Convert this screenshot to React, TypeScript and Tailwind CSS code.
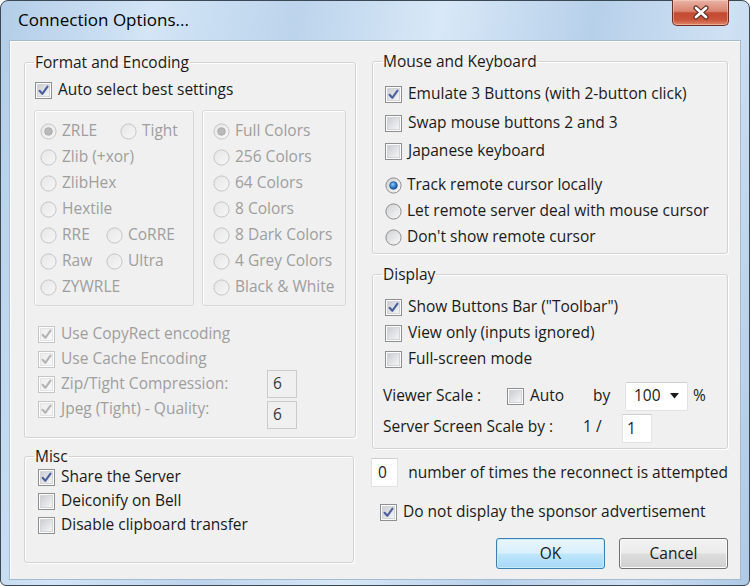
import { useId } from 'react';
import type { ReactNode } from 'react';

type MarkProps = { checked?: boolean; disabled?: boolean };

const cleanId = (id: string) => id.replace(/[^a-zA-Z0-9]/g, '');

function CheckMark({ checked, disabled }: MarkProps) {
  const id = cleanId(useId());
  return (
    <svg width="17" height="17" viewBox="0 0 17 17" className="shrink-0">
      <defs>
        <linearGradient id={id} x1="0" y1="0" x2="1" y2="1">
          <stop offset="0" stopColor={disabled ? '#ececec' : '#c9ccd2'} />
          <stop offset="1" stopColor={disabled ? '#f8f8f8' : '#f7f7f7'} />
        </linearGradient>
      </defs>
      <rect x="0.5" y="0.5" width="16" height="16" fill="#fdfdfd" stroke={disabled ? '#c6c6c6' : '#8e8f8f'} />
      <rect x="2.5" y="2.5" width="12" height="12" fill={`url(#${id})`} stroke={disabled ? '#e4e4e4' : '#d2d4d8'} />
      {checked && (
        <path
          d="M4.6 8.8 7.3 11.8 12.5 4.6"
          fill="none"
          stroke={disabled ? '#b3b3b3' : '#4a5f9c'}
          strokeWidth="2.1"
          strokeLinecap="round"
          strokeLinejoin="round"
        />
      )}
    </svg>
  );
}

function RadioMark({ checked, disabled }: MarkProps) {
  const id = cleanId(useId());
  return (
    <svg width="17" height="17" viewBox="0 0 17 17" className="shrink-0">
      <defs>
        <linearGradient id={id + 'a'} x1="0" y1="0" x2="1" y2="1">
          <stop offset="0" stopColor={disabled ? '#e6e6e6' : '#cfd1d4'} />
          <stop offset="1" stopColor={disabled ? '#f7f7f7' : '#fafafa'} />
        </linearGradient>
        <radialGradient id={id + 'b'} cx="0.4" cy="0.35" r="0.7">
          <stop offset="0" stopColor="#8fd0ff" />
          <stop offset="0.55" stopColor="#2f7fd0" />
          <stop offset="1" stopColor="#174a8a" />
        </radialGradient>
      </defs>
      <circle cx="8.5" cy="8.5" r="7.6" fill={`url(#${id}a)`} stroke={disabled ? '#c4c4c4' : '#8c8c8c'} />
      {checked && (
        <circle
          cx="8.5"
          cy="8.5"
          r="3.8"
          fill={disabled ? '#b9b9b9' : `url(#${id}b)`}
          stroke={disabled ? '#a4a4a4' : '#1b4f8f'}
          strokeWidth="0.8"
        />
      )}
    </svg>
  );
}

type RowProps = MarkProps & { label: string; className?: string; children?: ReactNode };

function CheckRow({ label, checked, disabled, className = '', children }: RowProps) {
  return (
    <div className={`flex h-[20px] items-center ${className}`}>
      <CheckMark checked={checked} disabled={disabled} />
      <span className={`ml-[6px] whitespace-nowrap ${disabled ? 'text-[#9e9e9e]' : ''}`}>{label}</span>
      {children}
    </div>
  );
}

function RadioItem({ label, checked, disabled, className = '' }: RowProps) {
  return (
    <div className={`flex h-[20px] items-center ${className}`}>
      <RadioMark checked={checked} disabled={disabled} />
      <span className={`ml-[5px] whitespace-nowrap ${disabled ? 'text-[#9e9e9e]' : ''}`}>{label}</span>
    </div>
  );
}

function Group({ title, className = '', children }: { title: string; className?: string; children: ReactNode }) {
  return (
    <fieldset
      className={`rounded-[3px] border border-[#d3d3d3] px-[9px] shadow-[inset_1px_1px_0_#ffffff,1px_1px_0_#ffffff] ${className}`}
    >
      <legend className="px-[1px] leading-[20px]">{title}</legend>
      {children}
    </fieldset>
  );
}

function CloseGlyph() {
  return (
    <svg width="18" height="15" viewBox="0 0 18 15">
      <path d="M4 3 14 12 M14 3 4 12" stroke="#5a2a22" strokeWidth="5" strokeLinecap="round" />
      <path d="M4 3 14 12 M14 3 4 12" stroke="#ffffff" strokeWidth="2.8" strokeLinecap="round" />
    </svg>
  );
}

export default function App() {
  return (
    <div className="h-[586px] w-[750px] bg-white font-['Open_Sans',sans-serif] text-[15.5px] text-[#1a1a1a]">
      <div className="flex h-full w-full flex-col rounded-t-[8px] rounded-b-[6px] border border-[#3d4855] bg-[linear-gradient(100deg,#b3cde8_0%,#d3e5f6_18%,#bcd4ec_35%,#d8e8f7_52%,#b7d0ea_70%,#cfe1f3_86%,#aec9e6_100%)] px-[8px] pb-[5px]">
        <div className="flex h-[39px] shrink-0 items-start justify-between">
          <div className="pl-[9px] pt-[8px] text-[17px] leading-[22px] text-black">Connection Options...</div>
          <div className="-mt-px mr-[12px] flex h-[26px] w-[57px] items-center justify-center rounded-b-[5px] border border-t-0 border-[#6b2f26] bg-[linear-gradient(#eab3a6,#d98571_45%,#c44a32_52%,#c9553b_80%,#e0866a)] shadow-[inset_0_0_0_1px_rgba(255,220,210,0.45)]">
            <CloseGlyph />
          </div>
        </div>

        <div className="flex flex-1 border border-[#a4bad0] bg-[#f0f0f0] shadow-[inset_1px_1px_0_#ffffff]">
          {/* left column */}
          <div className="ml-[14px] mt-[11px] flex w-[330px] flex-col">
            <Group title="Format and Encoding" className="h-[386px]">
              <CheckRow label="Auto select best settings" checked className="ml-[1px] mt-[8px]" />
              <div className="mt-[10px] flex gap-[8px]">
                <div className="flex h-[196px] w-[160px] flex-col gap-[6px] rounded-[3px] border border-[#d9d9d9] pl-[5px] pt-[10px] shadow-[inset_1px_1px_0_#ffffff]">
                  <div className="flex">
                    <RadioItem label="ZRLE" checked disabled className="w-[80px]" />
                    <RadioItem label="Tight" disabled />
                  </div>
                  <RadioItem label="Zlib (+xor)" disabled />
                  <RadioItem label="ZlibHex" disabled />
                  <RadioItem label="Hextile" disabled />
                  <div className="flex">
                    <RadioItem label="RRE" disabled className="w-[66px]" />
                    <RadioItem label="CoRRE" disabled />
                  </div>
                  <div className="flex">
                    <RadioItem label="Raw" disabled className="w-[66px]" />
                    <RadioItem label="Ultra" disabled />
                  </div>
                  <RadioItem label="ZYWRLE" disabled />
                </div>
                <div className="flex h-[196px] w-[144px] flex-col gap-[6px] rounded-[3px] border border-[#d9d9d9] pl-[10px] pt-[10px] shadow-[inset_1px_1px_0_#ffffff]">
                  <RadioItem label="Full Colors" checked disabled />
                  <RadioItem label="256 Colors" disabled />
                  <RadioItem label="64 Colors" disabled />
                  <RadioItem label="8 Colors" disabled />
                  <RadioItem label="8 Dark Colors" disabled />
                  <RadioItem label="4 Grey Colors" disabled />
                  <RadioItem label="Black & White" disabled />
                </div>
              </div>
              <div className="ml-[4px] mt-[18px] flex flex-col gap-[5px]">
                <CheckRow label="Use CopyRect encoding" checked disabled />
                <CheckRow label="Use Cache Encoding" checked disabled />
                <div className="flex h-[20px] items-center">
                  <CheckMark checked disabled />
                  <span className="ml-[6px] w-[206px] whitespace-nowrap text-[#9e9e9e]">Zip/Tight Compression:</span>
                  <div className="flex h-[28px] w-[30px] shrink-0 items-center border border-[#cbcbcb] pl-[5px] text-[#3a3a3a]">6</div>
                </div>
                <div className="flex h-[20px] items-center">
                  <CheckMark checked disabled />
                  <span className="ml-[6px] w-[206px] whitespace-nowrap text-[#9e9e9e]">Jpeg (Tight) - Quality:</span>
                  <div className="mt-[11px] flex h-[28px] w-[30px] shrink-0 items-center border border-[#cbcbcb] pl-[5px] text-[#3a3a3a]">6</div>
                </div>
              </div>
            </Group>

            <Group title="Misc" className="mt-[8px] h-[117px]">
              <div className="ml-[4px] mt-[1px] flex flex-col gap-[4px]">
                <CheckRow label="Share the Server" checked />
                <CheckRow label="Deiconify on Bell" />
                <CheckRow label="Disable clipboard transfer" />
              </div>
            </Group>
          </div>

          {/* right column */}
          <div className="ml-[18px] mt-[10px] flex w-[356px] flex-col">
            <Group title="Mouse and Keyboard" className="h-[203px]">
              <div className="ml-[3px] mt-[13px] flex flex-col">
                <CheckRow label="Emulate 3 Buttons (with 2-button click)" checked />
                <CheckRow label="Swap mouse buttons 2 and 3" className="mt-[9px]" />
                <CheckRow label="Japanese keyboard" className="mt-[8px]" />
                <RadioItem label="Track remote cursor locally" checked className="mt-[14px]" />
                <RadioItem label="Let remote server deal with mouse cursor" className="mt-[6px]" />
                <RadioItem label="Don't show remote cursor" className="mt-[6px]" />
              </div>
            </Group>

            <Group title="Display" className="mt-[10px] h-[185px]">
              <div className="ml-[3px] mt-[13px] flex flex-col gap-[6px]">
                <CheckRow label={'Show Buttons Bar ("Toolbar")'} checked />
                <CheckRow label="View only (inputs ignored)" />
                <CheckRow label="Full-screen mode" />
              </div>
              <div className="ml-[1px] mt-[17px] flex h-[20px] items-center">
                <span className="w-[124px] whitespace-nowrap">Viewer Scale :</span>
                <CheckMark />
                <span className="ml-[6px] w-[63px]">Auto</span>
                <span className="w-[32px]">by</span>
                <div className="flex h-[29px] w-[63px] items-center justify-between rounded-[2px] border border-[#e2e2e2] border-t-[#cfcfcf] bg-white pl-[8px] pr-[8px]">
                  <span>100</span>
                  <svg width="9" height="6" viewBox="0 0 9 6">
                    <path d="M0 0h9L4.5 5.5z" fill="#1a1a1a" />
                  </svg>
                </div>
                <span className="ml-[5px]">%</span>
              </div>
              <div className="ml-[1px] mt-[11px] flex h-[20px] items-center">
                <span className="w-[200px] whitespace-nowrap">Server Screen Scale by :</span>
                <span className="w-[39px]">1 /</span>
                <div className="mt-[3px] flex h-[29px] w-[30px] items-center border border-[#e2e2e2] border-t-[#cfcfcf] bg-white pl-[4px]">1</div>
              </div>
            </Group>

            <div className="-ml-px mt-[9px] flex items-center">
              <div className="flex h-[29px] w-[34px] items-center border border-[#e2e2e2] border-t-[#cfcfcf] bg-white pl-[6px]">0</div>
              <span className="ml-[10px] whitespace-nowrap">number of times the reconnect is attempted</span>
            </div>

            <CheckRow label="Do not display the sponsor advertisement" checked className="ml-[8px] mt-[15px]" />

            <div className="mt-[16px] flex justify-end gap-[14px]">
              <button className="flex h-[31px] w-[109px] items-center justify-center rounded-[3px] border border-[#3c7fb1] bg-[linear-gradient(#eaf6fd,#d9f0fc_48%,#bee6fd_52%,#a7d9f5)] shadow-[inset_0_0_0_1px_#c6eaff]">
                OK
              </button>
              <button className="flex h-[31px] w-[109px] items-center justify-center rounded-[3px] border border-[#707070] bg-[linear-gradient(#f2f2f2,#ebebeb_48%,#dddddd_52%,#cfcfcf)] shadow-[inset_0_0_0_1px_#fbfbfb]">
                Cancel
              </button>
            </div>
          </div>
        </div>
      </div>
    </div>
  );
}
